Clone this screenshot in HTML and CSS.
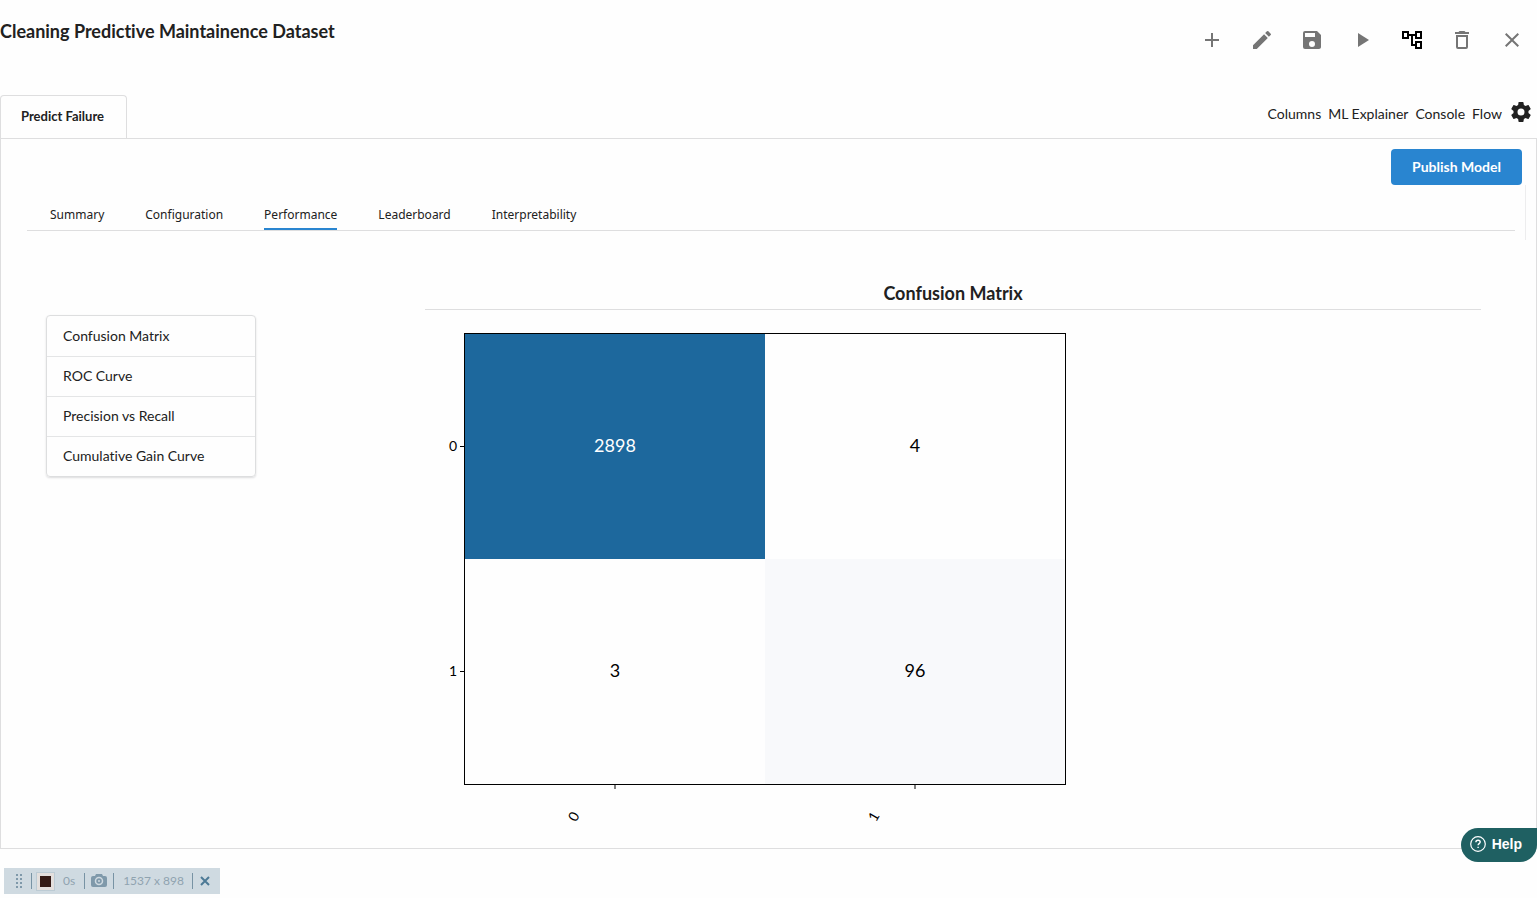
FILE: index.html
```html
<!DOCTYPE html>
<html lang="en">
<head>
    <meta charset="utf-8">
    <title>Cleaning Predictive Maintainence Dataset</title>
    <link rel="stylesheet" href="styles.css">
</head>
<body>
    <header class="page-header">
        <h1>Cleaning Predictive Maintainence Dataset</h1>
        <div class="actions">
            <button type="button" aria-label="Add">
                <svg viewBox="0 0 24 24"><path d="M19 13h-6v6h-2v-6H5v-2h6V5h2v6h6z"/></svg>
            </button>
            <button type="button" aria-label="Edit">
                <svg viewBox="0 0 24 24"><path d="M3 17.25V21h3.75L17.81 9.94l-3.75-3.75L3 17.25zM20.71 7.04a1 1 0 0 0 0-1.41l-2.34-2.34a1 1 0 0 0-1.41 0l-1.83 1.83 3.75 3.75 1.83-1.83z"/></svg>
            </button>
            <button type="button" aria-label="Save">
                <svg viewBox="0 0 24 24"><path d="M17 3H5a2 2 0 0 0-2 2v14a2 2 0 0 0 2 2h14c1.1 0 2-.9 2-2V7l-4-4zm-5 16a3 3 0 1 1 0-6 3 3 0 0 1 0 6zm3-10H5V5h10v4z"/></svg>
            </button>
            <button type="button" aria-label="Run">
                <svg viewBox="0 0 24 24"><path d="M8 5v14l11-7z"/></svg>
            </button>
            <button type="button" class="active" aria-label="Flow view">
                <svg viewBox="0 0 24 24"><path d="M22 11V3h-7v3H9V3H2v8h7V8h2v10h4v3h7v-8h-7v3h-2V8h2v3h7zM7 9H4V5h3v4zm10 6h3v4h-3v-4zm0-10h3v4h-3V5z"/></svg>
            </button>
            <button type="button" aria-label="Delete">
                <svg viewBox="0 0 24 24"><path d="M6 19a2 2 0 0 0 2 2h8a2 2 0 0 0 2-2V7H6v12zM8 9h8v10H8V9zm7.5-5l-1-1h-5l-1 1H5v2h14V4h-3.500z"/></svg>
            </button>
            <button type="button" aria-label="Close">
                <svg viewBox="0 0 24 24"><path d="M19 6.41L17.59 5 12 10.59 6.41 5 5 6.41 10.590 12 5 17.59 6.41 19 12 13.410 17.590 19 19 17.590 13.410 12z"/></svg>
            </button>
        </div>
    </header>

    <div class="tab-bar">
        <a href="#model" class="tab">Predict Failure</a>
        <nav class="views">
            <a href="#columns">Columns</a>
            <a href="#explainer">ML Explainer</a>
            <a href="#console">Console</a>
            <a href="#flow">Flow</a>
            <button type="button" aria-label="Settings">
                <svg viewBox="0 0 24 24"><path d="M19.430 12.980c.04-.32.07-.64.07-.98s-.03-.66-.07-.98l2.110-1.650c.19-.15.24-.42.12-.64l-2-3.460c-.12-.22-.39-.3-.61-.22l-2.490 1c-.52-.4-1.080-.73-1.690-.98l-.38-2.650A.49.49 0 0 0 14 2h-4c-.25 0-.46.18-.49.42l-.38 2.650c-.61.25-1.170.59-1.690.98l-2.490-1c-.23-.09-.49 0-.61.22l-2 3.460c-.13.22-.07.49.12.64l2.110 1.650c-.04.32-.07.65-.07.98s.03.66.07.98l-2.110 1.650c-.19.15-.24.42-.12.64l2 3.460c.12.22.39.3.61.22l2.490-1c.52.4 1.080.73 1.690.98l.38 2.650c.03.24.24.42.49.42h4c.25 0 .46-.18.49-.42l.38-2.650c.61-.25 1.170-.59 1.690-.98l2.490 1c.23.09.49 0 .61-.22l2-3.460c.12-.22.07-.49-.12-.64l-2.110-1.650zM12 15.500a3.500 3.500 0 1 1 0-7 3.500 3.500 0 0 1 0 7z"/></svg>
            </button>
        </nav>
    </div>

    <main class="panel" id="model">
        <div class="panel-top">
            <button type="button" class="publish">Publish Model</button>
        </div>
        <div class="section-bar">
            <nav class="sections">
                <a href="#summary">Summary</a>
                <a href="#configuration">Configuration</a>
                <a href="#performance" class="current">Performance</a>
                <a href="#leaderboard">Leaderboard</a>
                <a href="#interpretability">Interpretability</a>
            </nav>
        </div>
        <div class="content">
            <nav class="charts">
                <a href="#confusion">Confusion Matrix</a>
                <a href="#roc">ROC Curve</a>
                <a href="#precision">Precision vs Recall</a>
                <a href="#gain">Cumulative Gain Curve</a>
            </nav>
            <section class="chart" id="confusion">
                <h2>Confusion Matrix</h2>
                <svg class="matrix" width="660" height="520" viewBox="0 0 660 520">
                    <rect x="40" y="24" width="300" height="225" fill="#1d689d"/>
                    <rect x="340" y="249" width="300" height="225" fill="#f8f9fb"/>
                    <rect x="39.500" y="23.500" width="601" height="451" fill="none" stroke="#000"/>
                    <path d="M35 136.500h4M35 361.500h4M190 475v4M490 475v4" stroke="#000"/>
                    <g class="values">
                        <text x="190" y="142" class="light">2898</text>
                        <text x="490" y="142">4</text>
                        <text x="190" y="367">3</text>
                        <text x="490" y="367">96</text>
                    </g>
                    <g class="ticks">
                        <text x="28" y="141">0</text>
                        <text x="28" y="366">1</text>
                        <text transform="translate(153 509) rotate(-60)">0</text>
                        <text transform="translate(453 509) rotate(-60)">1</text>
                    </g>
                </svg>
            </section>
        </div>
    </main>

    <div class="recorder">
        <svg class="grip" width="8" height="14" viewBox="0 0 8 14"><path d="M0 0h2v2H0zM4 0h2v2H4zM0 4h2v2H0zM4 4h2v2H4zM0 8h2v2H0zM4 8h2v2H4zM0 12h2v2H0zM4 12h2v2H4z"/></svg>
        <div class="record">
            <button type="button" class="stop" aria-label="Stop"></button>
            <span>0s</span>
        </div>
        <button type="button" class="snap" aria-label="Snapshot">
            <svg width="16" height="14" viewBox="0 0 16 14"><path d="M5 0h6l1 2h2a2 2 0 0 1 2 2v7a2 2 0 0 1-2 2H2a2 2 0 0 1-2-2V4a2 2 0 0 1 2-2h2z"/><circle cx="8" cy="7" r="3.500" fill="none" stroke="#cfdae1" stroke-width="1.500"/><circle cx="8" cy="7" r="1" fill="#cfdae1"/></svg>
        </button>
        <span class="size">1537 x 898</span>
        <button type="button" class="dismiss" aria-label="Close recorder">
            <svg width="10" height="10" viewBox="0 0 10 10"><path d="M1 1l8 8M9 1L1 9" stroke="#4d7a96" stroke-width="2"/></svg>
        </button>
    </div>

    <button type="button" class="help">
        <svg width="16" height="16" viewBox="0 0 16 16" fill="none" stroke="#fff"><circle cx="8" cy="8" r="7.300" stroke-width="1.200"/><path d="M5.900 6.300c0-2.800 4.300-2.600 4.300-.2 0 1.500-2.100 1.600-2.100 3.200M8.100 10.700v1.400" stroke-width="1.400"/></svg>
        Help
    </button>
</body>
</html>
```
FILE: styles.css
```css
* {
    box-sizing: border-box;
}

body {
    margin: 0;
    background: #fefefe;
    color: #212121;
    font-family: Lato, "Liberation Sans", sans-serif;
    font-size: 14px;
    font-variant-ligatures: none;
    line-height: 20px;
}

a {
    color: inherit;
    text-decoration: none;
}

button {
    padding: 0;
    border: 0;
    background: none;
    color: inherit;
    font: inherit;
    cursor: pointer;
}

svg {
    display: block;
}

.page-header {
    display: flex;
    justify-content: space-between;
    align-items: flex-start;
    height: 95px;
    padding-top: 20px;
}

h1 {
    margin: 0;
    font-size: 18px;
    line-height: 23px;
}

.actions {
    display: flex;
    gap: 26px;
    padding: 8px 13px 0 0;
}

.actions svg {
    width: 24px;
    height: 24px;
    fill: #757575;
}

.actions .active svg {
    fill: #000;
}

.tab-bar {
    display: flex;
    justify-content: space-between;
}

.tab {
    height: 43px;
    padding: 10px 22px 0 20px;
    border: 1px solid #dededf;
    border-bottom: 0;
    border-radius: 4px 4px 0 0;
    font-size: 13px;
    font-weight: bold;
}

.views {
    display: flex;
    align-items: flex-start;
    gap: 7px;
    padding: 9px 4px 0 0;
}

.views button {
    margin-top: -4px;
}

.views svg {
    width: 24px;
    height: 24px;
    fill: #212121;
}

.panel {
    border: 1px solid #dededf;
    padding-bottom: 18px;
}

.panel-top {
    display: flex;
    justify-content: flex-end;
    padding: 10px 14px 0;
}

.publish {
    height: 36px;
    padding: 0 21px;
    border-radius: 4px;
    background: #2985d0;
    color: #fff;
    font-weight: bold;
}

.section-bar {
    height: 55px;
    margin-right: 10px;
    padding: 18px 10px 0 26px;
    border-right: 1px solid #ededee;
}

.sections {
    display: flex;
    gap: 41px;
    height: 28px;
    padding-left: 23px;
    border-bottom: 1px solid #dededf;
    font-family: "Noto Sans", sans-serif;
    font-size: 12px;
}

.sections a {
    padding-top: 2px;
}

.sections .current {
    border-bottom: 2px solid #2985d0;
}

.content {
    display: grid;
    grid-template-columns: 210px 1fr;
    gap: 169px;
    padding: 40px 55px 0 45px;
}

.charts {
    align-self: start;
    margin-top: 35px;
    border: 1px solid #dddedf;
    border-radius: 4px;
    box-shadow: 0 1px 2px rgba(34, 36, 38, 0.15);
}

.charts a {
    display: block;
    height: 40px;
    padding: 10px 16px;
}

.charts a + a {
    padding-top: 9px;
    border-top: 1px solid #e4e5e6;
}

h2 {
    margin: 0;
    padding: 2px 0 4px;
    border-bottom: 1px solid #dededf;
    font-size: 18px;
    line-height: 23px;
    text-align: center;
}

.matrix text {
    fill: #000;
}

.values {
    font-size: 18px;
    text-anchor: middle;
}

.matrix .light {
    fill: #fff;
}

.ticks {
    font-size: 14px;
    text-anchor: middle;
}

.recorder {
    display: flex;
    align-items: center;
    width: max-content;
    height: 26px;
    margin: 19px 4px 0;
    padding: 0 10px 0 12px;
    background: #cfdae1;
    color: #8fa3b0;
    font-size: 12px;
}

.grip,
.snap svg {
    fill: #7f99aa;
}

.record,
.snap,
.size,
.dismiss {
    display: flex;
    align-items: center;
    height: 16px;
    border-left: 1px solid #7893a4;
}

.record {
    gap: 9px;
    margin-left: 7px;
    padding: 0 9px 0 5px;
}

.stop {
    width: 17px;
    height: 17px;
    border: 3px solid #e3dfdd;
    background: #341a15;
    outline: 1px solid #bccbd4;
}

.snap {
    padding: 0 6px;
}

.size {
    padding: 0 8px 0 9px;
}

.dismiss {
    padding-left: 7px;
}

.help {
    position: fixed;
    right: 0;
    bottom: 36px;
    display: flex;
    align-items: center;
    gap: 6px;
    height: 34px;
    padding: 0 15px 2px 9px;
    border-radius: 17px 0 17px 17px;
    background: #1f6062;
    color: #fff;
    font-family: "Liberation Sans", sans-serif;
    font-size: 14px;
    font-weight: bold;
}
```
